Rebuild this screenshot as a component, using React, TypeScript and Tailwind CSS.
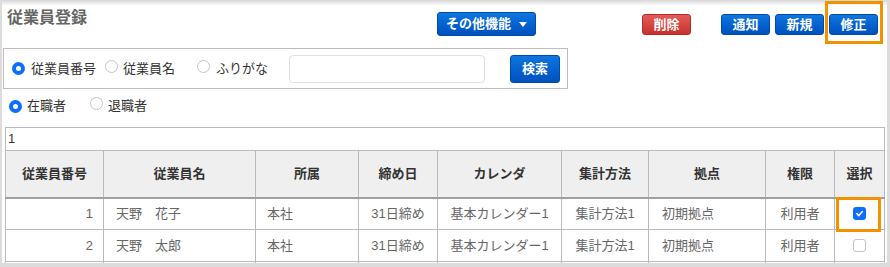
import React from "react";

const font = { fontFamily: '"Liberation Sans", "Noto Sans CJK JP", sans-serif' };

function Radio({ checked }: { checked?: boolean }) {
  return checked ? (
    <span className="inline-block w-[13px] h-[13px] rounded-full border-[4px] border-[#0d6efd] bg-white shrink-0" />
  ) : (
    <span className="inline-block w-[13px] h-[13px] rounded-full border border-[#c4c4c4] bg-white shrink-0" />
  );
}

function Btn({ children, w, red }: { children: React.ReactNode; w: string; red?: boolean }) {
  return (
    <div
      className={
        "h-[21px] rounded-[3px] flex items-center justify-center text-white text-[13px] font-bold " +
        w +
        (red
          ? " bg-linear-to-b from-[#e25b57] to-[#c7322e] border border-[#b52b27]"
          : " bg-linear-to-b from-[#0f76e0] to-[#0050bf] border border-[#004aa8]")
      }
    >
      {children}
    </div>
  );
}

const cols = [98, 152, 103, 79, 124, 87, 117, 69, 50];
const heads = ["従業員番号", "従業員名", "所属", "締め日", "カレンダ", "集計方法", "拠点", "権限", "選択"];

const rows = [
  { no: "1", name: "天野　花子", checked: true },
  { no: "2", name: "天野　太郎", checked: false },
];

export default function App() {
  return (
    <div
      className="w-[890px] h-[267px] relative overflow-hidden bg-white border-l-2 border-r-[3px] border-b-[4px] border-[#dcdcdc]"
      style={font}
    >
      <div className="absolute inset-x-0 top-0 h-[6px] bg-linear-to-b from-[#d6d6d6] to-transparent pointer-events-none" />

      {/* header */}
      <div className="flex items-start h-[48px]">
        <div className="w-[435px] pl-[5px] pt-[7px] text-[16px] leading-[22px] font-bold text-[#666]">従業員登録</div>
        <div className="mt-[12px] w-[99px] h-[24px] rounded-[3px] bg-linear-to-b from-[#0f76e0] to-[#0050bf] border border-[#004aa8] flex items-center justify-center gap-[8px] text-white text-[13px] font-bold">
          <span>その他機能</span>
          <span className="w-0 h-0 border-l-[4px] border-r-[4px] border-t-[5px] border-l-transparent border-r-transparent border-t-white" />
        </div>
        <div className="ml-[106px] mt-[14px]">
          <Btn w="w-[49px]" red>削除</Btn>
        </div>
        <div className="ml-[30px] mt-[14px] flex gap-[5px]">
          <Btn w="w-[49px]">通知</Btn>
          <Btn w="w-[49px]">新規</Btn>
          <Btn w="w-[49px]">修正</Btn>
        </div>
      </div>

      {/* search box */}
      <div className="ml-[1px] w-[565px] h-[41px] border border-[#bdbdbd] flex items-center pl-[8px] text-[13px] text-[#333]">
        <Radio checked />
        <span className="ml-[6px]">従業員番号</span>
        <span className="ml-[9px]"><Radio /></span>
        <span className="ml-[5px]">従業員名</span>
        <span className="ml-[22px]"><Radio /></span>
        <span className="ml-[6px]">ふりがな</span>
        <div className="ml-[21px] w-[196px] h-[28px] rounded-[4px] border border-[#e0e0e0] bg-white" />
        <div className="ml-[25px] w-[50px] h-[28px] rounded-[3px] bg-linear-to-b from-[#0f76e0] to-[#0050bf] border border-[#004aa8] flex items-center justify-center text-white text-[13px] font-bold">
          検索
        </div>
      </div>

      {/* status radios */}
      <div className="h-[38px] pb-[4px] flex items-center pl-[7px] text-[13px] text-[#333]">
        <Radio checked />
        <span className="ml-[5px]">在職者</span>
        <span className="ml-[24px]"><Radio /></span>
        <span className="ml-[5px]">退職者</span>
      </div>

      {/* table */}
      <div className="ml-[3px] w-[880px]">
        <div className="h-[23px] border border-b-0 border-[#bbb] pl-[2px] text-[13px] leading-[22px] text-[#333]">1</div>
        <table className="table-fixed border-collapse w-[880px] text-[13px]">
          <colgroup>
            {cols.map((w, i) => (
              <col key={i} style={{ width: w }} />
            ))}
          </colgroup>
          <thead>
            <tr className="h-[47px] bg-[#efefef]">
              {heads.map((h) => (
                <th key={h} className="border border-[#bbb] border-b-2 border-b-[#a0a0a0] font-bold text-[#333] text-center p-0">
                  {h}
                </th>
              ))}
            </tr>
          </thead>
          <tbody className="text-[#666]">
            {rows.map((r) => (
              <tr key={r.no} className="h-[32px]">
                <td className="border border-[#bbb] text-right pr-[10px]">{r.no}</td>
                <td className="border border-[#bbb] pl-[12px]">{r.name}</td>
                <td className="border border-[#bbb] pl-[11px]">本社</td>
                <td className="border border-[#bbb] text-center">31日締め</td>
                <td className="border border-[#bbb] text-center">基本カレンダー1</td>
                <td className="border border-[#bbb] text-center">集計方法1</td>
                <td className="border border-[#bbb] pl-[13px]">初期拠点</td>
                <td className="border border-[#bbb] text-center">利用者</td>
                <td className="border border-[#bbb]">
                  <div className="flex justify-center">
                    {r.checked ? (
                      <span className="w-[13px] h-[13px] rounded-[3px] bg-[#0d6efd] flex items-center justify-center">
                        <svg width="9" height="9" viewBox="0 0 10 10">
                          <path d="M2 5.2 L4.2 7.3 L8 3" stroke="white" strokeWidth="1.8" fill="none" strokeLinecap="round" strokeLinejoin="round" />
                        </svg>
                      </span>
                    ) : (
                      <span className="w-[13px] h-[13px] rounded-[3px] border border-[#c4c4c4] bg-white" />
                    )}
                  </div>
                </td>
              </tr>
            ))}
            <tr className="h-[32px]">
              {cols.map((_, i) => (
                <td key={i} className="border border-[#bbb]" />
              ))}
            </tr>
          </tbody>
        </table>
      </div>

      {/* highlight overlays */}
      <div className="absolute left-[823px] top-[1px] w-[58px] h-[43px] border-[3px] border-[#f39200]" />
      <div className="absolute left-[834px] top-[197px] w-[45px] h-[35px] border-[3px] border-[#f39200]" />
    </div>
  );
}
